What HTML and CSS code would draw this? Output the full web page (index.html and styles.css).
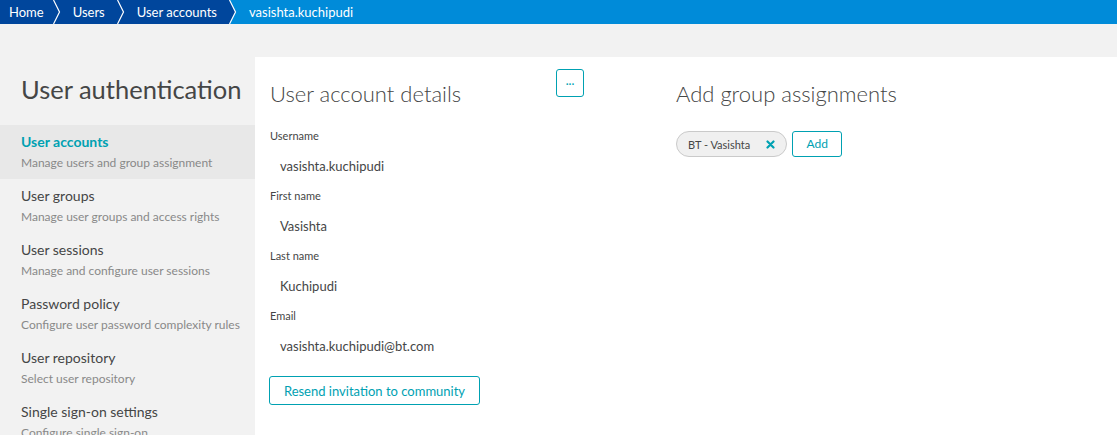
FILE: index.html
```html
<!DOCTYPE html>
<html lang="en">
<head>
<meta charset="utf-8">
<title>User accounts</title>
<link rel="stylesheet" href="styles.css">
</head>
<body>
<nav class="crumbs">
  <a class="crumb first">Home</a>
  <svg class="sep" width="14" height="24" viewBox="0 0 14 24"><rect width="14" height="24" fill="#00469c"/><polyline points="0.5,0 6.5,12 0.5,24" fill="none" stroke="#fff" stroke-width="1.2"/></svg>
  <a class="crumb">Users</a>
  <svg class="sep" width="14" height="24" viewBox="0 0 14 24"><rect width="14" height="24" fill="#00469c"/><polyline points="0.5,0 6.5,12 0.5,24" fill="none" stroke="#fff" stroke-width="1.2"/></svg>
  <a class="crumb">User accounts</a>
  <svg class="sep" width="14" height="24" viewBox="0 0 14 24"><rect width="14" height="24" fill="#008bd9"/><polygon points="0,0 0.5,0 6.5,12 0.5,24 0,24" fill="#00469c"/><polyline points="0.5,0 6.5,12 0.5,24" fill="none" stroke="#fff" stroke-width="1.2"/></svg>
  <span class="crumb current">vasishta.kuchipudi</span>
</nav>

<div class="page">
  <aside class="sidebar">
    <h1 class="side-title">User authentication</h1>
    <ul class="menu">
      <li class="item active"><span class="item-title">User accounts</span><span class="item-sub">Manage users and group assignment</span></li>
      <li class="item"><span class="item-title">User groups</span><span class="item-sub">Manage user groups and access rights</span></li>
      <li class="item"><span class="item-title">User sessions</span><span class="item-sub">Manage and configure user sessions</span></li>
      <li class="item"><span class="item-title">Password policy</span><span class="item-sub">Configure user password complexity rules</span></li>
      <li class="item"><span class="item-title">User repository</span><span class="item-sub">Select user repository</span></li>
      <li class="item"><span class="item-title">Single sign-on settings</span><span class="item-sub">Configure single sign-on</span></li>
    </ul>
  </aside>

  <main class="content">
    <section class="details">
      <div class="details-head">
        <h2 class="heading">User account details</h2>
        <button class="more" type="button">···</button>
      </div>
      <div class="field"><div class="label">Username</div><div class="value">vasishta.kuchipudi</div></div>
      <div class="field"><div class="label">First name</div><div class="value">Vasishta</div></div>
      <div class="field"><div class="label">Last name</div><div class="value">Kuchipudi</div></div>
      <div class="field"><div class="label">Email</div><div class="value">vasishta.kuchipudi@bt.com</div></div>
      <button class="btn resend" type="button">Resend invitation to community</button>
    </section>

    <section class="groups">
      <h2 class="heading groups-heading">Add group assignments</h2>
      <div class="chips">
        <span class="chip">BT - Vasishta
          <svg class="chip-x" width="9" height="9" viewBox="0 0 9 9"><path d="M1.5 1.5 L7.5 7.5 M7.5 1.5 L1.5 7.5" stroke="#00a1b2" stroke-width="2.2" stroke-linecap="round"/></svg>
        </span>
        <button class="btn add" type="button">Add</button>
      </div>
    </section>
  </main>
</div>
</body>
</html>
```

FILE: styles.css
```css
* { box-sizing: border-box; }
html, body { margin: 0; padding: 0; }
body {
  font-family: Lato, "Open Sans", sans-serif;
  background: #f2f2f2;
  color: #454646;
  width: 1117px;
  height: 435px;
  overflow: hidden;
}

.crumbs {
  display: flex;
  height: 24px;
  background: #008bd9;
  align-items: stretch;
}
.crumb {
  display: flex;
  align-items: center;
  color: #fff;
  font-size: 13px;
  background: #00469c;
  padding: 0 12px 0 6px;
}
.crumb.first { padding-left: 9px; padding-right: 9px; }
.crumb.current { background: #008bd9; padding-left: 6px; }
.sep { display: block; flex: none; }

.page {
  display: flex;
  padding-top: 33px;
  height: 411px;
}

.sidebar {
  width: 255px;
  flex: none;
}
.side-title {
  margin: 20px 0 23px 21px;
  font-size: 25.5px;
  font-weight: 400;
  color: #454646;
  line-height: 25px;
  white-space: nowrap;
}
.menu { list-style: none; margin: 0; padding: 0; }
.item {
  display: flex;
  flex-direction: column;
  height: 54px;
  padding: 8px 0 0 21px;
}
.item.active { background: #e8e8e8; }
.item-title {
  font-size: 14px;
  line-height: 18px;
  color: #454646;
}
.item.active .item-title { color: #00a1b2; font-weight: 700; }
.item-sub {
  font-size: 12px;
  line-height: 18px;
  margin-top: 3px;
  color: #898989;
  white-space: nowrap;
}

.content {
  flex: 1;
  background: #fff;
  display: flex;
  padding: 12px 0 0 15px;
}

.details { width: 314px; flex: none; display: flex; flex-direction: column; align-items: flex-start; }
.details-head {
  display: flex;
  justify-content: space-between;
  align-items: flex-start;
  width: 100%;
  margin-bottom: 22px;
}
.heading {
  margin: 12px 0 0;
  font-size: 22px;
  line-height: 26px;
  font-weight: 300;
  color: #454646;
}
.more {
  width: 28px;
  height: 28px;
  border: 1px solid #00a1b2;
  border-radius: 3px;
  background: #fff;
  color: #00a1b2;
  font-size: 11px;
  padding: 0;
  font-family: inherit;
  line-height: 1;
}

.field { display: flex; flex-direction: column; height: 60px; }
.label { font-size: 11px; line-height: 14px; color: #454646; }
.value { font-size: 13px; line-height: 18px; margin: 14px 0 0 10px; color: #454646; }

.btn {
  font-family: inherit;
  background: #fff;
  border: 1px solid #00a1b2;
  border-radius: 3px;
  color: #00a1b2;
  cursor: pointer;
}
.resend {
  margin: 7px 0 0 -1px;
  height: 29px;
  width: 211px;
  font-size: 13px;
  padding: 0;
}

.groups { margin-left: 92px; }
.groups-heading { margin-top: 12px; }
.chips { display: flex; align-items: center; gap: 5px; margin-top: 24px; }
.chip {
  display: inline-flex;
  align-items: center;
  gap: 16px;
  height: 26px;
  padding: 0 11px 0 11px;
  border: 1px solid #cacaca;
  border-radius: 13px;
  background: #f0f0f0;
  font-size: 11px;
  color: #454646;
}
.chip-x { display: block; }
.add {
  height: 26px;
  width: 50px;
  font-size: 12px;
  padding: 0;
  margin-top: -1px;
}
```
